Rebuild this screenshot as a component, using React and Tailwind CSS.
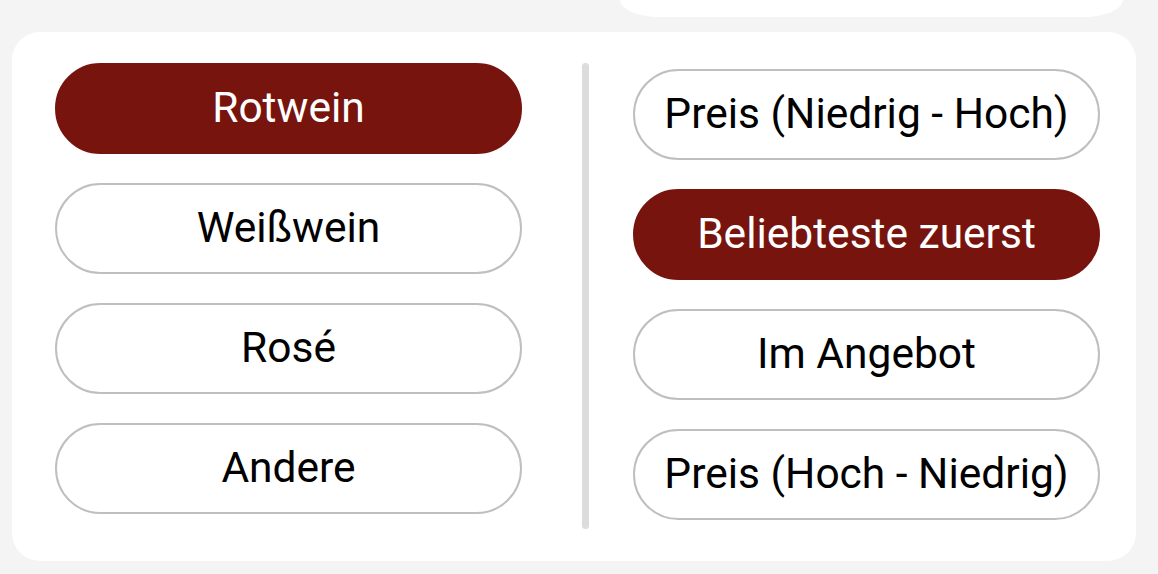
import { useState } from 'react'

const types = ['Rotwein', 'Weißwein', 'Rosé', 'Andere']
const sorts = ['Preis (Niedrig - Hoch)', 'Beliebteste zuerst', 'Im Angebot', 'Preis (Hoch - Niedrig)']

function Pill({ label, active, onClick }) {
  return (
    <button
      onClick={onClick}
      className={
        active
          ? 'w-full h-[91px] rounded-full bg-[#77140e] border-2 border-[#77140e] text-white text-[42.5px] leading-none'
          : 'w-full h-[91px] rounded-full bg-white border-2 border-[#bfbfbf] text-black text-[42.5px] leading-none'
      }
    >
      {label}
    </button>
  )
}

export default function App() {
  const [type, setType] = useState('Rotwein')
  const [sort, setSort] = useState('Beliebteste zuerst')

  return (
    <div className="w-[1158px] h-[574px] bg-[#f4f4f4] overflow-hidden" style={{ fontFamily: 'Roboto, "Noto Sans", sans-serif' }}>
      <div className="ml-[620px] w-[503px] h-[17px] bg-white rounded-bl-[40px_17px] rounded-br-[40px_17px]" />
      <div className="mt-[15px] ml-[12px] w-[1124px] h-[529px] bg-white rounded-[28px] flex pl-[43px] pt-[31px]">
        <div className="w-[467px] flex flex-col gap-[29px]">
          {types.map(t => <Pill key={t} label={t} active={type === t} onClick={() => setType(t)} />)}
        </div>
        <div className="ml-[60px] w-[7px] h-[466px] rounded-full bg-[#dcdcdc]" />
        <div className="ml-[44px] w-[467px] flex flex-col gap-[29px] pt-[6px]">
          {sorts.map(s => <Pill key={s} label={s} active={sort === s} onClick={() => setSort(s)} />)}
        </div>
      </div>
    </div>
  )
}
